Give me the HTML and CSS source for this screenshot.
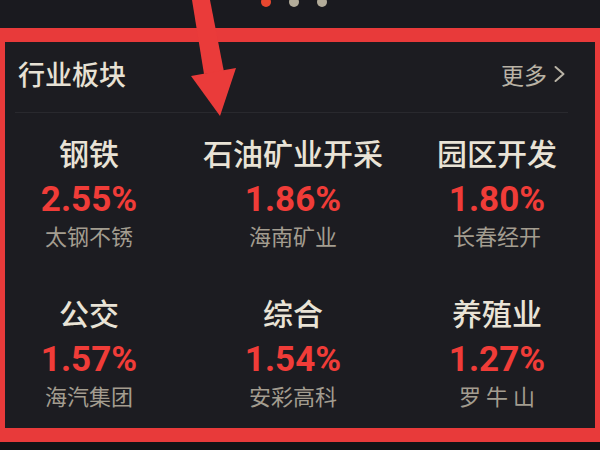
FILE: index.html
```html
<!DOCTYPE html>
<html lang="zh-CN">
<head>
<meta charset="utf-8">
<title>行业板块</title>
<link rel="stylesheet" href="styles.css">
</head>
<body>
<div class="page">
  <div class="topbar">
    <span class="dot dot-active"></span>
    <span class="dot"></span>
    <span class="dot"></span>
  </div>
  <section class="panel">
    <header class="panel-head">
      <h2 class="title">行业板块</h2>
      <a class="more">更多<svg class="chev" width="13" height="18" viewBox="0 0 13 18"><polyline points="2.5,2 10.5,9 2.5,16" fill="none" stroke="#b9b3a6" stroke-width="2" stroke-linecap="round" stroke-linejoin="round"/></svg></a>
    </header>
    <div class="grid">
      <div class="item"><div class="name">钢铁</div><div class="pct">2.55%</div><div class="lead">太钢不锈</div></div>
      <div class="item"><div class="name">石油矿业开采</div><div class="pct">1.86%</div><div class="lead">海南矿业</div></div>
      <div class="item"><div class="name">园区开发</div><div class="pct">1.80%</div><div class="lead">长春经开</div></div>
      <div class="item"><div class="name">公交</div><div class="pct">1.57%</div><div class="lead">海汽集团</div></div>
      <div class="item"><div class="name">综合</div><div class="pct">1.54%</div><div class="lead">安彩高科</div></div>
      <div class="item"><div class="name">养殖业</div><div class="pct">1.27%</div><div class="lead">罗 牛 山</div></div>
    </div>
  </section>
  <svg class="arrow" width="600" height="130" viewBox="0 0 600 130">
    <polygon points="192,0 210,0 224,72 204,74" fill="#ea3b3a"/>
    <polygon points="191,76 236,68 220,116" fill="#ea3b3a"/>
  </svg>
</div>
</body>
</html>
```
FILE: styles.css
```css
html, body {
  margin: 0;
  padding: 0;
}
body {
  background: #131316;
  font-family: "Noto Sans CJK SC", "Noto Sans", sans-serif;
}
.page {
  position: relative;
  width: 600px;
  height: 450px;
  overflow: hidden;
  background: #131316;
}
.topbar {
  height: 28px;
  background: #1a1a1f;
  display: flex;
  justify-content: center;
  align-items: flex-start;
  gap: 18px;
  padding-right: 12px;
  box-sizing: border-box;
}
.dot {
  width: 10px;
  height: 10px;
  border-radius: 50%;
  background: #b3ac9a;
  margin-top: -3px;
}
.dot-active {
  background: #e8472f;
}
.panel {
  border-style: solid;
  border-color: #e83a3a;
  border-width: 14px 5px 14px 5px;
  background: #1c1c21;
  height: 386px;
}
.panel-head {
  display: flex;
  justify-content: space-between;
  align-items: flex-start;
  margin: 0 27px 0 10px;
  padding: 14px 2px 0 3px;
  height: 56px;
  border-bottom: 1px solid #29292e;
}
.title {
  margin: 0;
  font-size: 27px;
  line-height: 36px;
  font-weight: 500;
  color: #e7e1d4;
}
.more {
  display: flex;
  align-items: center;
  gap: 6px;
  font-size: 23px;
  line-height: 36px;
  color: #b9b3a6;
}
.chev {
  display: block;
}
.grid {
  display: grid;
  grid-template-columns: 168px 168px 168px;
  column-gap: 36px;
  row-gap: 39px;
  margin-top: 15px;
  padding-left: 0;
}
.item {
  display: flex;
  flex-direction: column;
  align-items: center;
  text-align: center;
  white-space: nowrap;
}
.name {
  font-size: 30px;
  line-height: 48px;
  font-weight: 500;
  color: #e9e3d6;
}
.pct {
  font-family: Roboto, "Liberation Sans", sans-serif;
  font-size: 35px;
  line-height: 44px;
  padding-top: 2px;
  font-weight: 700;
  color: #f03c38;
}
.lead {
  font-size: 22px;
  line-height: 27px;
  color: #a39d90;
}
.arrow {
  position: absolute;
  left: 0;
  top: 0;
}
```
